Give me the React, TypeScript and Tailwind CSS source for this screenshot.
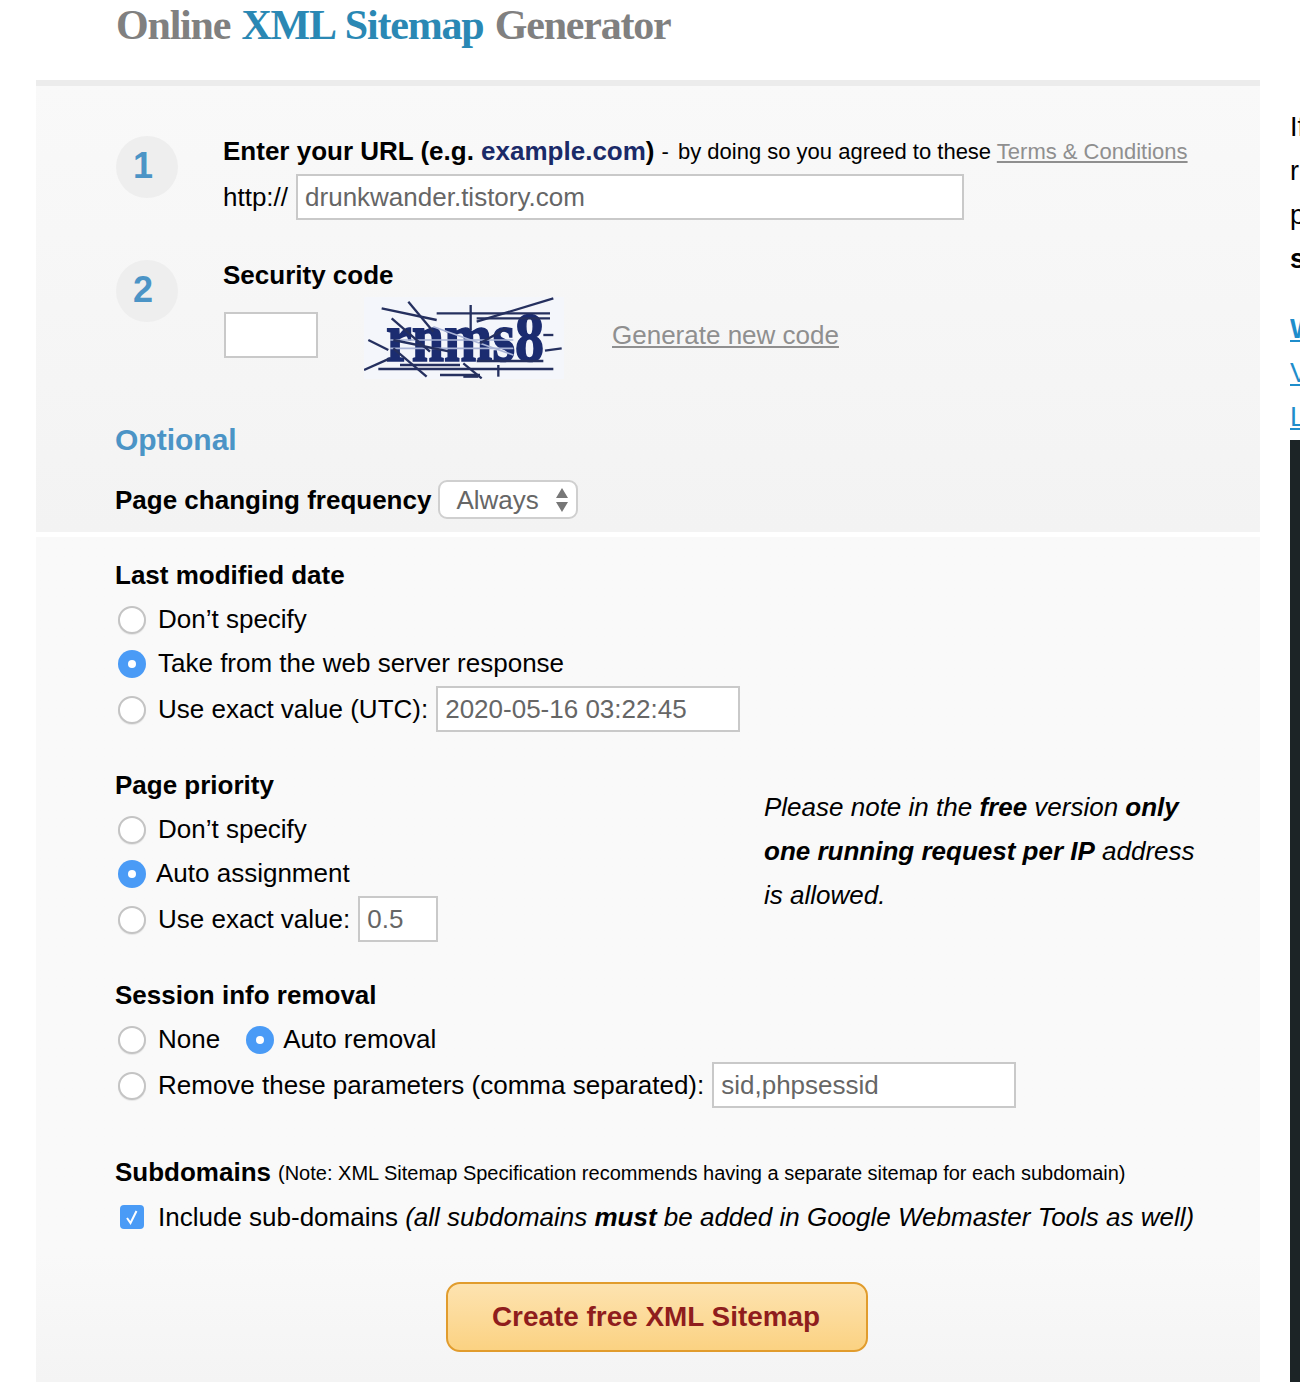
const sans = "font-['Liberation_Sans',Arial,sans-serif]";

function Radio({ on }: { on?: boolean }) {
  return on ? (
    <span className="mt-[2px] flex h-[28px] w-[28px] shrink-0 items-center justify-center rounded-full bg-[#4a9bf6]">
      <span className="h-[8px] w-[8px] rounded-full bg-white" />
    </span>
  ) : (
    <span className="mt-[2px] block h-[28px] w-[28px] shrink-0 rounded-full border-2 border-[#c4c4c4] bg-white shadow-[0_1px_1px_rgba(0,0,0,0.08)]" />
  );
}

function Row({ on, label, children, gap = "gap-[12px]", h = "h-[44px]" }: { on?: boolean; label: string; children?: React.ReactNode; gap?: string; h?: string }) {
  return (
    <div className={`flex ${h} items-center pl-[2px]`}>
      <label className={`flex items-center ${gap}`}>
        <Radio on={on} />
        <span>{label}</span>
      </label>
      {children}
    </div>
  );
}

function Field({ value, w, h = "h-[46px]", ml = "ml-[8px]" }: { value: string; w: string; h?: string; ml?: string }) {
  return <div className={`${w} ${h} ${ml} flex items-center border-2 border-[#c9c9c9] bg-white px-[7px] text-[#666]`}>{value}</div>;
}

function Heading({ children }: { children: React.ReactNode }) {
  return <div className="flex h-[44px] items-center font-bold">{children}</div>;
}

function Step({ n }: { n: string }) {
  return (
    <div className="flex h-[62px] w-[62px] shrink-0 items-center justify-center rounded-full bg-[#eeeeee] pb-[3px] pr-[8px] text-[36px] font-bold text-[#4b94c6]">
      {n}
    </div>
  );
}

function Captcha() {
  const lines = [
    [95, 70, 260, 105], [175, 50, 250, 140], [260, 85, 600, 85], [362, 60, 362, 135], [610, 40, 380, 110], [125, 100, 240, 200],
    [55, 165, 115, 195], [42, 255, 120, 220], [85, 252, 610, 252], [150, 240, 330, 240], [130, 190, 230, 275], [380, 100, 600, 100],
    [380, 228, 580, 228], [580, 150, 610, 150], [585, 197, 635, 190], [270, 270, 390, 270], [340, 275, 385, 275], [445, 240, 445, 275], [340, 235, 395, 280], [130, 165, 300, 200], [390, 175, 470, 130],
  ];
  const light = [[120, 165, 490, 165], [120, 190, 490, 190], [250, 125, 490, 210]];
  return (
    <svg viewBox="42 36 600 246" className="h-[82px] w-[200px] shrink-0">
      <rect x="42" y="36" width="600" height="246" fill="#f4f6fb" />
      <text x="108" y="228" fontFamily="'Liberation Serif', serif" fontWeight="700" fontSize="210" fill="#1b2c70" stroke="#1b2c70" strokeWidth="5" textLength="474" lengthAdjust="spacingAndGlyphs">rnms8</text>
      {light.map((l, i) => (
        <line key={i} x1={l[0]} y1={l[1]} x2={l[2]} y2={l[3]} stroke="#aab4d6" strokeWidth="5" />
      ))}
      {lines.map((l, i) => (
        <line key={i} x1={l[0]} y1={l[1]} x2={l[2]} y2={l[3]} stroke="#25305f" strokeWidth="7" />
      ))}
    </svg>
  );
}

export default function App() {
  return (
    <div className={`${sans} flex h-[1382px] w-[1300px] overflow-hidden bg-white text-[26px] leading-none text-black`}>
      <div className="ml-[36px] flex w-[1224px] shrink-0 flex-col">
        <h1 className="flex h-[44px] items-center whitespace-nowrap pt-[6px] pl-[80px] font-['Liberation_Serif',serif] text-[42px] font-bold tracking-[-1.2px] text-[#808080] [word-spacing:2px]">
          Online&nbsp;<span className="text-[#2a88b4]">XML Sitemap</span>&nbsp;Generator
        </h1>
        <section className="mt-[36px] h-[452px] border-t-[6px] border-[#ececec] bg-gradient-to-b from-[#f9f9f9] to-[#f3f3f3] pl-[79px]">
          <div className="flex pl-[1px] pt-[50px]">
            <Step n="1" />
            <div className="ml-[45px] -mt-[7px]">
              <div className="flex h-[44px] items-center whitespace-nowrap">
                <span className="font-bold">Enter your URL (e.g. <span className="text-[#1a2a68]">example.com</span>)</span>
                <span className="ml-[7px] pt-[2px] text-[22px]">- <span className="ml-[3px]">by doing so you agreed to these</span> <a className="text-[#8f8f8f] underline">Terms &amp; Conditions</a></span>
              </div>
              <div className="mt-[1px] flex items-center">
                <span>http://</span>
                <Field value="drunkwander.tistory.com" w="w-[668px]" />
              </div>
            </div>
          </div>
          <div className="flex pl-[1px] pt-[40px]">
            <Step n="2" />
            <div className="ml-[45px] -mt-[7px]">
              <Heading>Security code</Heading>
              <div className="-mt-[2px] flex h-[85px] items-center">
                <div className="ml-[1px] -mt-[6px] h-[46px] w-[94px] border-2 border-[#c9c9c9] bg-white" />
                <div className="ml-[46px]"><Captcha /></div>
                <a className="ml-[48px] -mt-[6px] text-[#8f8f8f] underline">Generate new code</a>
              </div>
            </div>
          </div>
          <div className="mt-[40px] flex h-[40px] items-center text-[30px] font-bold text-[#4b94c6]">Optional</div>
          <div className="mt-[20px] flex items-center">
            <span className="font-bold">Page changing frequency</span>
            <div className="ml-[7px] flex h-[39px] w-[140px] items-center justify-between rounded-[9px] border-2 border-[#cfcfcf] bg-white pl-[16px] pr-[8px] text-[#666]">
              <span>Always</span>
              <svg width="12" height="26" viewBox="0 0 12 26" className="text-[#777]" fill="currentColor">
                <path d="M6 1 L12 11 H0 Z M0 15 H12 L6 25 Z" />
              </svg>
            </div>
          </div>
        </section>
        <section className="mt-[5px] flex-1 bg-gradient-to-b from-[#f9f9f9] from-[85%] to-[#f4f4f4] pl-[79px] pt-[16px]">
          <Heading>Last modified date</Heading>
          <div className="pl-[1px]">
            <Row label="Don’t specify" />
            <Row on label="Take from the web server response" />
            <Row label="Use exact value (UTC):" h="h-[46px] mt-[1px]">
              <Field value="2020-05-16 03:22:45" w="w-[304px]" />
            </Row>
          </div>
          <div className="mt-[31px] flex">
            <div className="w-[649px] shrink-0">
              <Heading>Page priority</Heading>
              <div className="pl-[1px]">
                <Row label="Don’t specify" />
                <Row on label="Auto assignment" gap="gap-[10px]" />
                <Row label="Use exact value:" h="h-[46px] mt-[1px]">
                  <Field value="0.5" w="w-[80px]" />
                </Row>
              </div>
            </div>
            <p className="mt-[22px] w-[440px] text-[26px] italic leading-[44px]">
              Please note in the <b>free</b> version <b>only one running request per IP</b> address is allowed.
            </p>
          </div>
          <div className="mt-[31px]">
            <Heading>Session info removal</Heading>
            <div className="pl-[1px]">
              <div className="flex h-[44px] items-center gap-[24px]">
                <Row label="None" />
                <Row on label="Auto removal" gap="gap-[9px]" />
              </div>
              <Row label="Remove these parameters (comma separated):" h="h-[46px] mt-[1px]">
                <Field value="sid,phpsessid" w="w-[304px]" />
              </Row>
            </div>
          </div>
          <div className="mt-[42px] flex h-[44px] items-center whitespace-nowrap">
            <span className="font-bold">Subdomains</span>
            <span className="ml-[7px] pt-[1px] text-[20px]">(Note: XML Sitemap Specification recommends having a separate sitemap for each subdomain)</span>
          </div>
          <div className="mt-[1px] flex h-[44px] items-center whitespace-nowrap pl-[5px]">
            <span className="flex h-[24px] w-[24px] shrink-0 items-center justify-center rounded-[4px] bg-[#4a9bf6]">
              <svg width="16" height="16" viewBox="0 0 16 16" fill="none" stroke="#fff" strokeWidth="2"><path d="M3 9 L6.5 14 L12.5 2" /></svg>
            </span>
            <span className="ml-[14px]">Include sub-domains <i>(all subdomains <b>must</b> be added in Google Webmaster Tools as well)</i></span>
          </div>
          <button className="mt-[43px] ml-[331px] flex h-[70px] w-[422px] items-center justify-center rounded-[14px] border-2 border-[#e19c2d] bg-gradient-to-b from-[#fde3b0] to-[#fbd282] pr-[2px] text-[27.9px] font-bold text-[#8f1d1d]">
            Create free XML Sitemap
          </button>
        </section>
      </div>
      <aside className="ml-[30px] flex w-[10px] shrink-0 flex-col overflow-hidden whitespace-nowrap pt-[105px] text-[27px] leading-[44px]">
        <span>If</span>
        <span>r</span>
        <span>p</span>
        <b>s</b>
        <a className="mt-[26px] font-bold text-[#1f8dcb] underline">W</a>
        <a className="text-[#1f8dcb] underline">V</a>
        <a className="text-[#1f8dcb] underline">L</a>
        <div className="mt-[1px] h-[942px] w-[10px] bg-[#1c2426]" />
      </aside>
    </div>
  );
}
